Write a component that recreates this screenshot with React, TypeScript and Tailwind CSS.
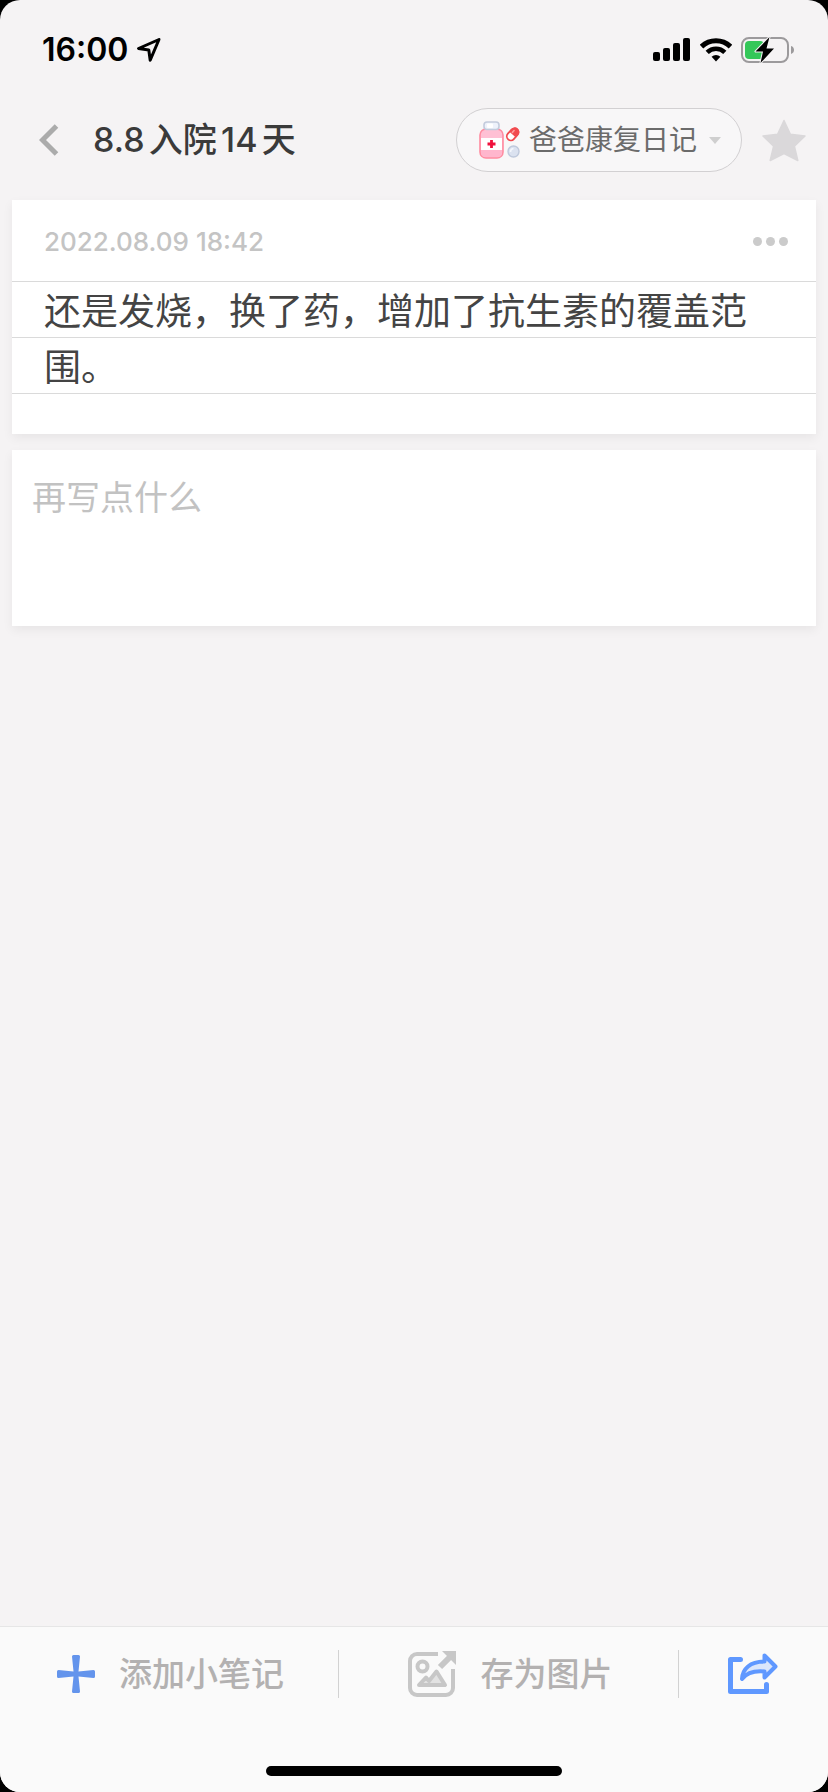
import { useState } from 'react'

// Outlined location arrow next to the clock
function LocationIcon() {
  return (
    <svg width="26" height="26" viewBox="0 0 26 26" fill="none" className="shrink-0">
      <path d="M23 2.5 2.5 11.5 12.8 13 14.2 23.2Z" stroke="black" strokeWidth="3" strokeLinejoin="round" />
    </svg>
  )
}

function SignalIcon() {
  return (
    <svg width="38" height="24" viewBox="0 0 38 24" className="shrink-0">
      <rect x="0" y="14" width="7" height="9" rx="2" />
      <rect x="10" y="10" width="7" height="13" rx="2" />
      <rect x="20" y="5" width="7" height="18" rx="2" />
      <rect x="30" y="0" width="7" height="23" rx="2" />
    </svg>
  )
}

function WifiIcon() {
  return (
    <svg width="32" height="24" viewBox="0 0 32 24" fill="none" className="shrink-0">
      <path d="M1.5 8.6a20.8 20.8 0 0 1 29 0" stroke="black" strokeWidth="5" />
      <path d="M7.2 14.4a12.6 12.6 0 0 1 17.6 0" stroke="black" strokeWidth="4.6" />
      <path d="M11.6 18.8a6.4 6.4 0 0 1 8.8 0L16 23.6Z" fill="black" />
    </svg>
  )
}

function BatteryIcon() {
  return (
    <svg width="54" height="28" viewBox="0 0 54 28" className="shrink-0">
      <rect x="1" y="2" width="46" height="24" rx="7" fill="none" stroke="#9c9a9c" strokeWidth="2" />
      <path d="M50 10v8c2-.6 3-2.2 3-4s-1-3.4-3-4Z" fill="#9c9a9c" />
      <rect x="4" y="5" width="19" height="18" rx="4" fill="#34c759" />
      <path
        d="M28.5 1 14.5 15.5h7.5L19.5 27 33 12.5h-7.5Z"
        fill="black"
        stroke="#f5f3f4"
        strokeWidth="2"
        paintOrder="stroke"
        strokeLinejoin="round"
      />
    </svg>
  )
}

function MedicineIcon() {
  return (
    <svg width="42" height="38" viewBox="0 0 42 38" className="shrink-0">
      {/* bottle */}
      <rect x="1" y="8" width="23" height="29" rx="6" fill="#ffc0d4" stroke="#ff8ba0" strokeWidth="1.6" />
      <path d="M2 17h21v12H2Z" fill="#fff" />
      <path d="M2 29h21v3c0 3-2 4-5 4H7c-3 0-5-1-5-4Z" fill="#ffb6cd" />
      <path d="M12.5 19v8M8.5 23h8" stroke="#f0113c" strokeWidth="2.8" />
      <rect x="5" y="1" width="15" height="7.5" rx="3" fill="#eef2fb" stroke="#c3cbdc" strokeWidth="1.6" />
      <rect x="8" y="2.5" width="6" height="4.5" rx="1" fill="#fff" />
      {/* capsule */}
      <g transform="rotate(-48 33.5 13.5)">
        <rect x="27" y="9.5" width="13.5" height="8" rx="4" fill="#fff" stroke="#f14b4f" strokeWidth="1.8" />
        <path d="M33.5 9h3.5a4.5 4.5 0 0 1 0 9h-3.5Z" fill="#f14b4f" />
        <path d="M35 12h2.5" stroke="#ff9c9c" strokeWidth="1.6" strokeLinecap="round" />
      </g>
      {/* tablet */}
      <circle cx="34.5" cy="30.5" r="5.5" fill="#dbe2f0" stroke="#bfc9dc" strokeWidth="1.4" />
      <path d="M31.5 31a3.5 3.5 0 0 1 3-3.5" stroke="#f4f7fd" strokeWidth="1.6" fill="none" />
    </svg>
  )
}

function StarIcon() {
  return (
    <svg width="44" height="43" viewBox="0 0 44 43" fill="#dad8da">
      <path
        d="M22 1.5 28.4 15.2 43 17 32.4 27.2 35.8 41.5 22 34.5 8.2 41.5 11.6 27.2 1 17 15.6 15.2Z"
        stroke="#dad8da"
        strokeWidth="1.5"
        strokeLinejoin="round"
      />
    </svg>
  )
}

function PlusIcon() {
  return (
    <svg width="38" height="38" viewBox="0 0 38 38" fill="#6394ec" className="shrink-0">
      <path d="M15 1.5Q15 0 16.5 0h5Q23 0 23 1.5L21.5 16.5 36.5 15Q38 15 38 16.5v5Q38 23 36.5 23L21.5 21.5 23 36.5Q23 38 21.5 38h-5Q15 38 15 36.5L16.5 21.5 1.5 23Q0 23 0 21.5v-5Q0 15 1.5 15L16.5 16.5Z" />
    </svg>
  )
}

function SaveImageIcon() {
  return (
    <svg width="48" height="46" viewBox="0 0 48 46" fill="none" className="shrink-0">
      <path
        d="M30 3H9a7 7 0 0 0-7 7v27a7 7 0 0 0 7 7h29a7 7 0 0 0 7-7V18"
        stroke="#c7c7c7"
        strokeWidth="4"
      />
      <circle cx="14.5" cy="15.5" r="5" stroke="#c7c7c7" strokeWidth="4" />
      <path
        d="M11 34 18 26.5 21 30 28.5 20.5 37 34Z"
        fill="#e2e2e2"
        stroke="#c7c7c7"
        strokeWidth="4"
        strokeLinejoin="round"
      />
      <path d="M32 16 42 6" stroke="#c7c7c7" strokeWidth="6" />
      <path d="M34 0h14v14Z" fill="#c7c7c7" />
    </svg>
  )
}

function ShareIcon() {
  return (
    <svg width="50" height="42" viewBox="0 0 50 42" fill="none" stroke="#5f98ff" strokeLinejoin="round" strokeLinecap="round">
      <path d="M12.5 6.5H2.500V38.5H38.5V31.5" strokeWidth="5" />
      <path
        d="M36.5 2.5 47.5 13.5 36.5 24.5V18.5C26 17.5 19 19.5 14 26 14.5 16 22 8.5 36.5 8.500Z"
        fill="#dbe6fb"
        strokeWidth="4"
      />
    </svg>
  )
}

function StatusBar() {
  return (
    <div className="flex h-[100px] items-center justify-between pl-[42px] pr-[33px]">
      <div className="flex items-center gap-2">
        <span className="text-[32px] leading-10 font-semibold text-black">16:00</span>
        <LocationIcon />
      </div>
      <div className="flex items-center gap-[9px]">
        <SignalIcon />
        <WifiIcon />
        <BatteryIcon />
      </div>
    </div>
  )
}

function Header() {
  const [starred, setStarred] = useState(false)

  return (
    <header className="flex h-20 items-center pl-[39px] pr-[22px]">
      <button type="button" aria-label="返回" className="mr-[34px]">
        <svg width="20" height="32" viewBox="0 0 20 32" fill="none">
          <path d="M17.5 2 3.5 16 17.5 30" stroke="#ababab" strokeWidth="5" />
        </svg>
      </button>
      <h1 className="flex-1 text-[34px] leading-10 font-medium text-[#3a3a3a] [text-autospace:normal]">8.8入院14天</h1>
      <button
        type="button"
        className="mr-5 flex h-16 items-center rounded-full border border-[#d2d0d2] bg-[#f8f7f8] pl-[22px] pr-5 text-[28px] leading-10 text-[#6b6b6b]"
      >
        <MedicineIcon />
        <span className="ml-2">爸爸康复日记</span>
        <svg width="12" height="7" viewBox="0 0 12 7" fill="#cfcfcf" className="ml-3">
          <path d="M0 0h12L6 7Z" />
        </svg>
      </button>
      <button type="button" aria-label="收藏" aria-pressed={starred} onClick={() => setStarred(!starred)}>
        <StarIcon />
      </button>
    </header>
  )
}

// Note card with ruled paper lines
function NoteCard({ date, text }: { date: string; text: string }) {
  return (
    <article className="bg-white pb-9 shadow-[0_4px_10px_rgba(0,0,0,0.06)]">
      <div className="flex h-[82px] items-center justify-between border-b border-[#dadada] pt-[2px] pl-8 pr-7">
        <time className="text-[26px] leading-8 font-medium text-[#c4c4c4]">{date}</time>
        <button type="button" aria-label="更多" className="flex gap-1">
          <span className="size-[9px] rounded-full bg-[#cbcbcb]" />
          <span className="size-[9px] rounded-full bg-[#cbcbcb]" />
          <span className="size-[9px] rounded-full bg-[#cbcbcb]" />
        </button>
      </div>
      <p className="bg-[linear-gradient(to_bottom,transparent_55px,#dadada_55px)] bg-[length:100%_56px] px-8 py-[2px] text-[37px] leading-[56px] text-[#444]">
        {text}
      </p>
    </article>
  )
}

function BottomBar() {
  return (
    <footer className="border-t border-[#e6e6e6] bg-[#fafafa]">
      <div className="flex h-[94px] items-center text-[33px] leading-10 font-medium text-[#b3b1b1]">
        <button type="button" className="flex h-12 w-[41%] items-center gap-6 border-r border-[#d2d2d2] pl-[57px]">
          <PlusIcon />
          添加小笔记
        </button>
        <button type="button" className="flex h-12 w-[41%] items-center gap-6 border-r border-[#d2d2d2] pl-[69px]">
          <SaveImageIcon />
          存为图片
        </button>
        <button type="button" aria-label="分享" className="flex flex-1 items-center justify-center">
          <ShareIcon />
        </button>
      </div>
      <div className="flex justify-center pt-[45px] pb-4">
        <div className="h-[10px] w-[296px] rounded-full bg-black" />
      </div>
    </footer>
  )
}

export default function App() {
  const [draft, setDraft] = useState('')

  return (
    <div className="min-h-screen bg-black">
      <div className="flex min-h-screen flex-col overflow-hidden rounded-[20px] bg-[#f5f3f4] font-['Inter','Noto_Sans_CJK_SC',sans-serif]">
        <StatusBar />
        <Header />
        <main className="flex flex-1 flex-col gap-4 px-3 pt-5">
          <NoteCard date="2022.08.09 18:42" text="还是发烧，换了药，增加了抗生素的覆盖范围。" />
          <textarea
            aria-label="再写点什么"
            placeholder="再写点什么"
            value={draft}
            onChange={e => setDraft(e.target.value)}
            className="block h-44 w-full resize-none bg-white px-5 py-6 text-[34px] leading-[48px] text-[#444] shadow-[0_4px_10px_rgba(0,0,0,0.06)] outline-none placeholder:text-[#c2c2c2]"
          />
        </main>
        <BottomBar />
      </div>
    </div>
  )
}
